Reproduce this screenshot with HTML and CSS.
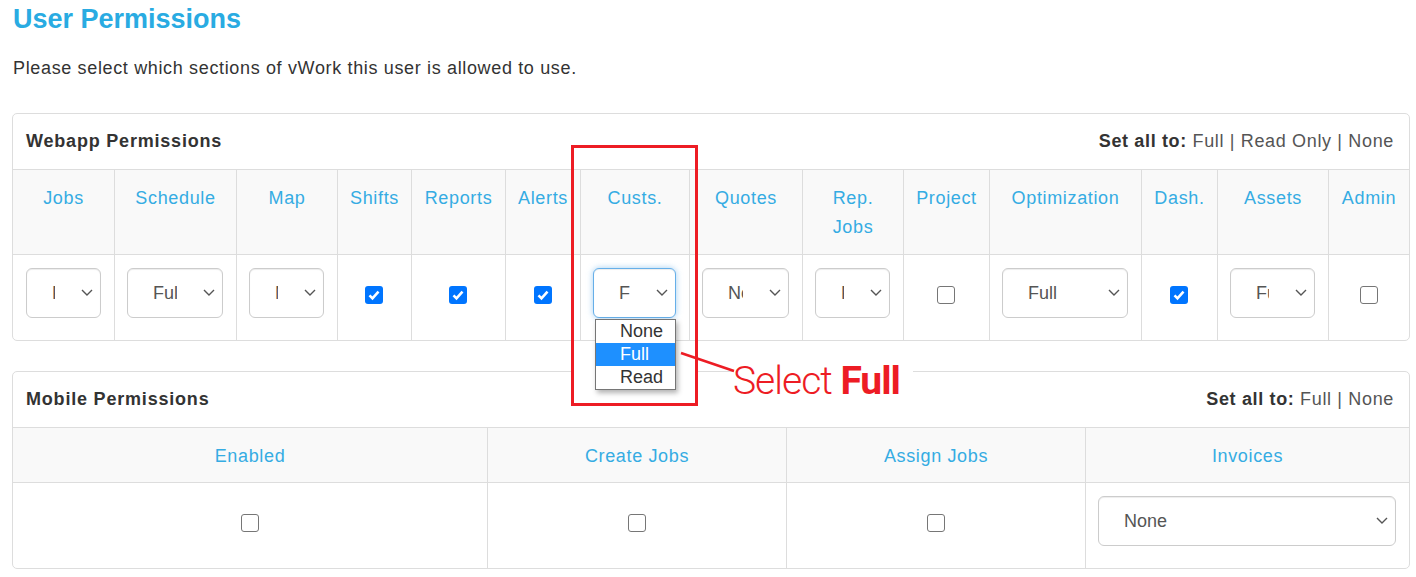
FILE: index.html
```html
<!DOCTYPE html>
<html lang="en">
<head>
    <meta charset="UTF-8">
    <meta name="viewport" content="width=device-width, initial-scale=1.0">
    <title>User Permissions</title>
    <link rel="stylesheet" href="styles.css">
</head>
<body>
    <div class="page">
        <h1>User Permissions</h1>
        <p class="lead">Please select which sections of vWork this user is allowed to use.</p>

        <div class="panel">
            <div class="panel-heading">
                <span class="panel-title">Webapp Permissions</span>
                <span class="set-all"><b>Set all to:</b> <a href="#">Full</a> | <a href="#">Read Only</a> | <a href="#">None</a></span>
            </div>
            <div class="perm-grid webapp">
                <div class="th">Jobs</div>
                <div class="th">Schedule</div>
                <div class="th">Map</div>
                <div class="th">Shifts</div>
                <div class="th">Reports</div>
                <div class="th">Alerts</div>
                <div class="th">Custs.</div>
                <div class="th">Quotes</div>
                <div class="th">Rep. Jobs</div>
                <div class="th">Project</div>
                <div class="th">Optimization</div>
                <div class="th">Dash.</div>
                <div class="th">Assets</div>
                <div class="th">Admin</div>

                <div class="td"><span class="select"><select><option>Full</option><option>None</option><option>Read</option></select><svg class="chev" viewBox="0 0 12 7"><path d="M1 1l5 5 5-5"/></svg></span></div>
                <div class="td"><span class="select"><select><option>Full</option><option>None</option><option>Read</option></select><svg class="chev" viewBox="0 0 12 7"><path d="M1 1l5 5 5-5"/></svg></span></div>
                <div class="td"><span class="select"><select><option>None</option><option>Full</option><option>Read</option></select><svg class="chev" viewBox="0 0 12 7"><path d="M1 1l5 5 5-5"/></svg></span></div>
                <div class="td"><span class="check on"><svg viewBox="0 0 18 18"><path d="M4.5 9.3l3 3 6-6.6"/></svg></span></div>
                <div class="td"><span class="check on"><svg viewBox="0 0 18 18"><path d="M4.5 9.3l3 3 6-6.6"/></svg></span></div>
                <div class="td"><span class="check on"><svg viewBox="0 0 18 18"><path d="M4.5 9.3l3 3 6-6.6"/></svg></span></div>
                <div class="td"><span class="select"><select class="focus"><option>Full</option><option>None</option><option>Read</option></select><svg class="chev" viewBox="0 0 12 7"><path d="M1 1l5 5 5-5"/></svg></span></div>
                <div class="td"><span class="select"><select><option>None</option><option>Full</option><option>Read</option></select><svg class="chev" viewBox="0 0 12 7"><path d="M1 1l5 5 5-5"/></svg></span></div>
                <div class="td"><span class="select"><select><option>Full</option><option>None</option><option>Read</option></select><svg class="chev" viewBox="0 0 12 7"><path d="M1 1l5 5 5-5"/></svg></span></div>
                <div class="td"><span class="check"></span></div>
                <div class="td"><span class="select"><select><option>Full</option><option>None</option><option>Read</option></select><svg class="chev" viewBox="0 0 12 7"><path d="M1 1l5 5 5-5"/></svg></span></div>
                <div class="td"><span class="check on"><svg viewBox="0 0 18 18"><path d="M4.5 9.3l3 3 6-6.6"/></svg></span></div>
                <div class="td"><span class="select"><select><option>Full</option><option>None</option><option>Read</option></select><svg class="chev" viewBox="0 0 12 7"><path d="M1 1l5 5 5-5"/></svg></span></div>
                <div class="td"><span class="check"></span></div>
            </div>
        </div>

        <div class="panel">
            <div class="panel-heading">
                <span class="panel-title">Mobile Permissions</span>
                <span class="set-all"><b>Set all to:</b> <a href="#">Full</a> | <a href="#">None</a></span>
            </div>
            <div class="perm-grid mobile">
                <div class="th">Enabled</div>
                <div class="th">Create Jobs</div>
                <div class="th">Assign Jobs</div>
                <div class="th">Invoices</div>

                <div class="td"><span class="check"></span></div>
                <div class="td"><span class="check"></span></div>
                <div class="td"><span class="check"></span></div>
                <div class="td"><span class="select"><select><option>None</option><option>Full</option><option>Read</option></select><svg class="chev" viewBox="0 0 12 7"><path d="M1 1l5 5 5-5"/></svg></span></div>
            </div>
        </div>

        <!-- screenshot annotation -->
        <div class="note-frame"></div>
        <div class="note-mask frame-mask"></div>
        <div class="note-mask text-mask"></div>
        <div class="dropdown">
            <div>None</div>
            <div class="hl">Full</div>
            <div>Read</div>
        </div>
        <svg class="note-line" viewBox="0 0 60 24"><path d="M3 3L56 21"/></svg>
        <div class="note-text">Select <b>Full</b></div>
    </div>
</body>
</html>
```

FILE: styles.css
```css
body {
    margin: 0;
    font-family: "Liberation Sans", Arial, sans-serif;
    font-size: 18px;
    letter-spacing: 0.65px;
    color: #333;
    background: #fff;
}
.page {
    position: relative;
    padding: 4px 6px 0 12px;
}
h1 {
    margin: 0 0 0 1px;
    font-size: 27px;
    line-height: 30px;
    letter-spacing: 0;
    color: #29abe2;
}
.lead {
    margin: 21px 0 0 1px;
    line-height: 26px;
}
.panel {
    margin-top: 32px;
    border: 1px solid #ddd;
    border-radius: 5px;
}
.panel + .panel {
    margin-top: 30px;
}
.panel-heading {
    display: flex;
    justify-content: space-between;
    padding: 13px 15px 13px 13px;
    line-height: 29px;
    border-bottom: 1px solid #ddd;
}
.panel-title {
    font-weight: bold;
    letter-spacing: 0.8px;
}
.set-all {
    color: #555;
}
.set-all b {
    color: #333;
}
.set-all a {
    color: #555;
    text-decoration: none;
}
.perm-grid {
    display: grid;
}
.webapp {
    grid-template-columns: 101px 122px 101px 74px 94px 75px 109px 113px 101px 86px 152px 76px 111px 81px;
}
.mobile {
    grid-template-columns: 474px 299px 299px 324px;
}
.th {
    background: #f9f9f9;
    color: #35ace3;
    text-align: center;
    line-height: 29px;
    padding: 14px 8px 11px;
    border-left: 1px solid #ddd;
    border-bottom: 1px solid #ddd;
}
.webapp .th {
    padding-bottom: 12px;
}
.td {
    display: flex;
    align-items: center;
    justify-content: center;
    height: 50px;
    padding: 13px 13px 22px 12px;
    border-left: 1px solid #ddd;
}
.webapp > :nth-child(14n+1),
.mobile > :nth-child(4n+1) {
    border-left: 0;
}
.webapp > .td:nth-child(14n+1) {
    padding-left: 13px;
}
.select {
    position: relative;
    display: block;
    width: 100%;
    height: 50px;
}
.select select {
    -webkit-appearance: none;
    appearance: none;
    box-sizing: border-box;
    width: 100%;
    height: 50px;
    margin: 0;
    padding: 0 45px 0 25px;
    border: 1px solid #ccc;
    border-radius: 6px;
    background: #fff;
    box-shadow: inset 0 1px 1px rgba(0,0,0,0.075);
    font-family: "Liberation Sans", Arial, sans-serif;
    font-size: 18px;
    letter-spacing: 0;
    color: #555;
    outline: none;
}
.select select.focus {
    border-color: #66afe9;
    box-shadow: inset 0 1px 1px rgba(0,0,0,0.075), 0 0 6px rgba(102,175,233,0.6);
}
.chev {
    position: absolute;
    right: 8px;
    top: 50%;
    width: 12px;
    height: 7px;
    margin-top: -4px;
    fill: none;
    stroke: #555;
    stroke-width: 1.4;
    pointer-events: none;
}
.check {
    box-sizing: border-box;
    width: 18px;
    height: 18px;
    margin-top: 3px;
    border: 1.5px solid #767676;
    border-radius: 3px;
    background: #fff;
}
.check.on {
    border: 0;
    background: #0075ff;
}
.check svg {
    display: block;
    width: 18px;
    height: 18px;
    fill: none;
    stroke: #fff;
    stroke-width: 2.6;
}

/* annotation laid over the screenshot */
.note-frame {
    position: absolute;
    left: 571px;
    top: 145px;
    width: 127px;
    height: 261px;
    box-sizing: border-box;
    border: 3px solid #ed1c24;
    z-index: 3;
}
.note-mask {
    position: absolute;
    background: #fff;
    z-index: 1;
}
.frame-mask {
    left: 574px;
    top: 344px;
    width: 121px;
    height: 59px;
}
.text-mask {
    left: 733px;
    top: 348px;
    width: 180px;
    height: 58px;
}
.dropdown {
    position: absolute;
    left: 595px;
    top: 319px;
    width: 79px;
    border: 1px solid #767676;
    background: #fff;
    box-shadow: 2px 3px 5px rgba(0,0,0,0.3);
    letter-spacing: 0;
    z-index: 2;
}
.dropdown div {
    height: 23px;
    line-height: 23px;
    padding-left: 24px;
    color: #333;
}
.dropdown .hl {
    background: #1e90ff;
    color: #fff;
}
.note-line {
    position: absolute;
    left: 678px;
    top: 350px;
    width: 60px;
    height: 24px;
    fill: none;
    stroke: #ed1c24;
    stroke-width: 2.5;
    z-index: 2;
}
.note-text {
    position: absolute;
    left: 733px;
    top: 362px;
    font-family: Roboto, sans-serif;
    font-weight: 300;
    font-size: 39px;
    line-height: 39px;
    letter-spacing: -1px;
    color: #ed1c24;
    white-space: nowrap;
    z-index: 2;
}
.note-text b {
    font-weight: bold;
}
```
